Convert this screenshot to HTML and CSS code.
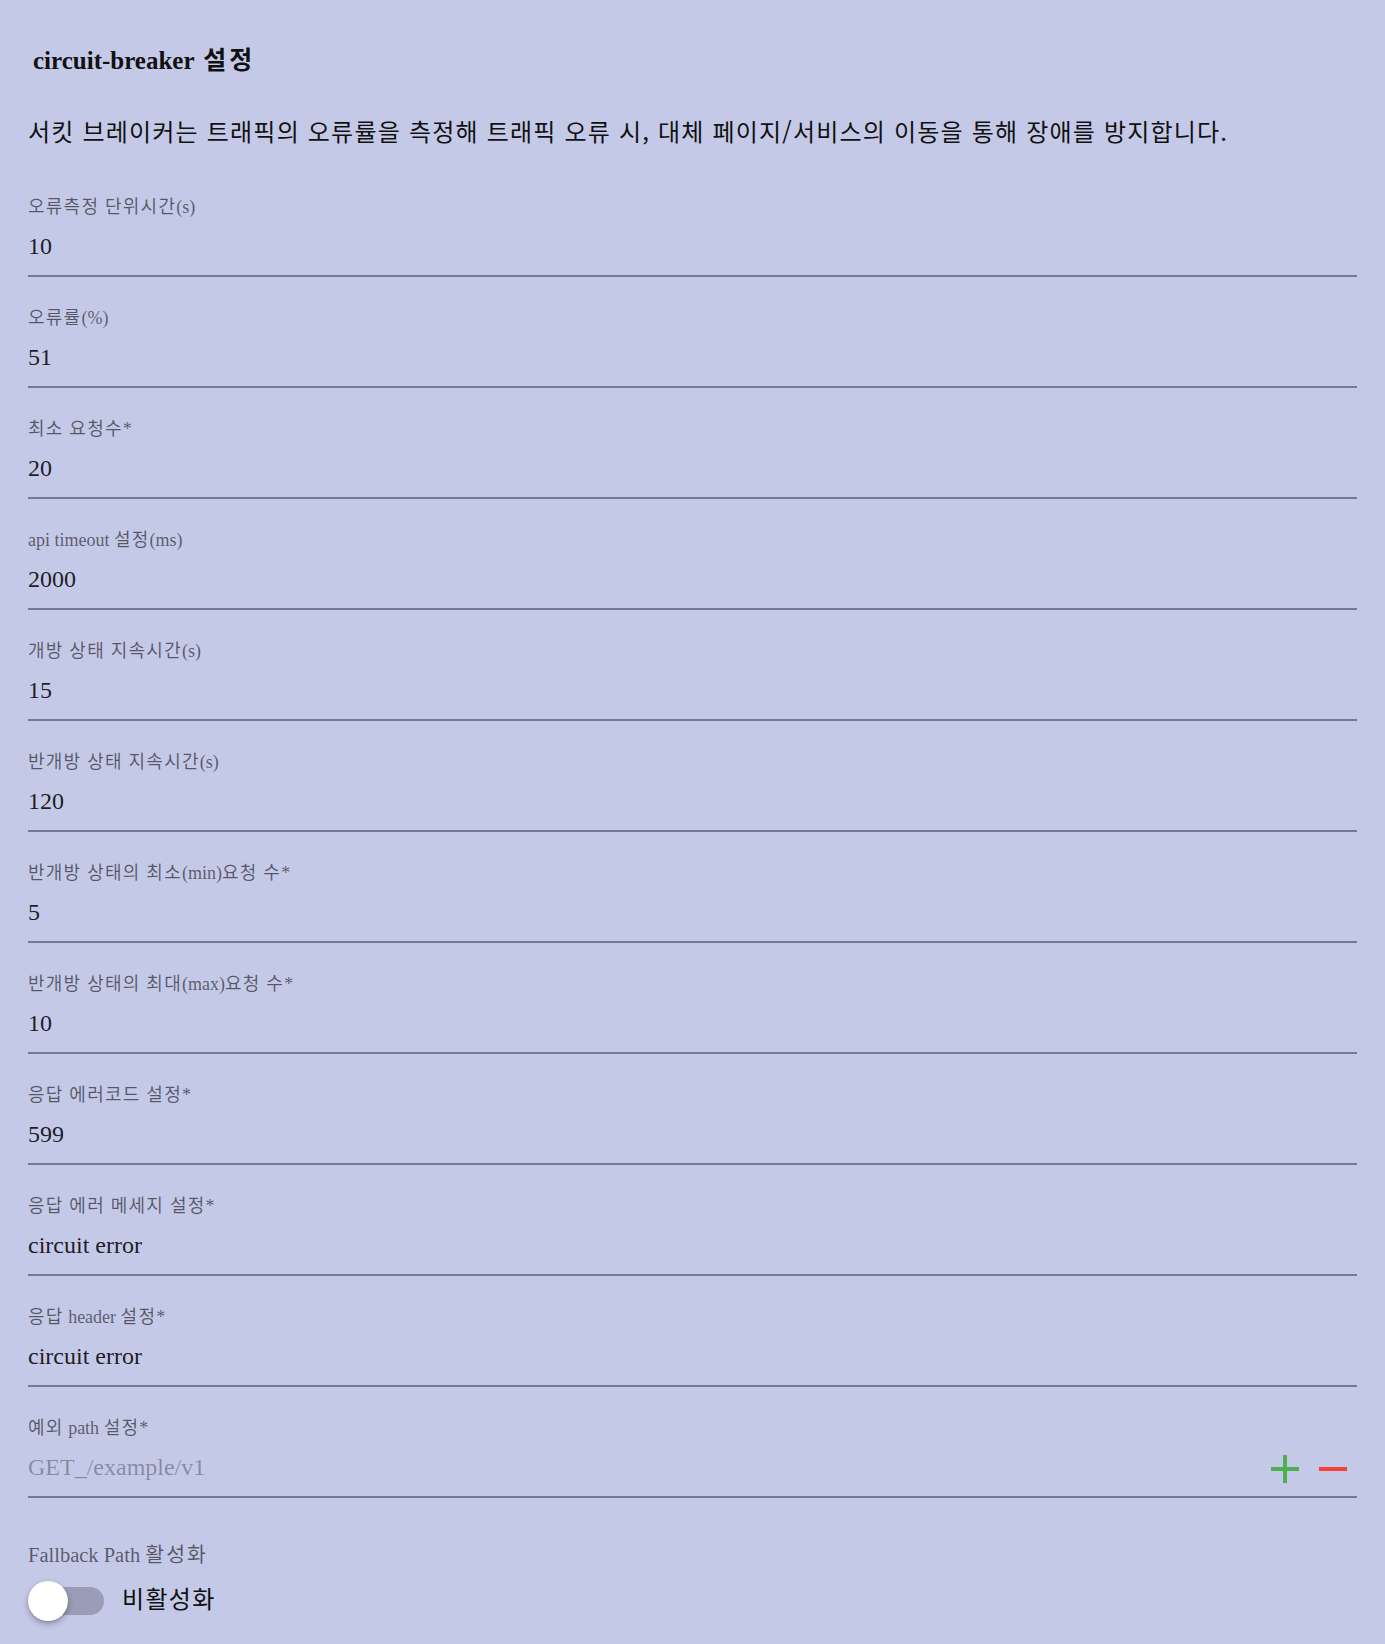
FILE: index.html
```html
<!DOCTYPE html>
<html lang="ko">
<head>
<meta charset="utf-8">
<title>circuit-breaker 설정</title>
<link rel="stylesheet" href="styles.css">
</head>
<body>
<main class="page">
  <h2 class="title">circuit-breaker <span class="ko">설정</span></h2>
  <p class="desc">서킷 브레이커는 트래픽의 오류률을 측정해 트래픽 오류 시, 대체 페이지/서비스의 이동을 통해 장애를 방지합니다.</p>

  <div class="fields">
    <label class="field"><span class="label"><span class="ko">오류측정 단위시간</span>(s)</span><input class="input" value="10"></label>
    <label class="field"><span class="label"><span class="ko">오류률</span>(%)</span><input class="input" value="51"></label>
    <label class="field"><span class="label"><span class="ko">최소 요청수</span>*</span><input class="input" value="20"></label>
    <label class="field"><span class="label">api timeout <span class="ko">설정</span>(ms)</span><input class="input" value="2000"></label>
    <label class="field"><span class="label"><span class="ko">개방 상태 지속시간</span>(s)</span><input class="input" value="15"></label>
    <label class="field"><span class="label"><span class="ko">반개방 상태 지속시간</span>(s)</span><input class="input" value="120"></label>
    <label class="field"><span class="label"><span class="ko">반개방 상태의 최소</span>(min)<span class="ko">요청 수</span>*</span><input class="input" value="5"></label>
    <label class="field"><span class="label"><span class="ko">반개방 상태의 최대</span>(max)<span class="ko">요청 수</span>*</span><input class="input" value="10"></label>
    <label class="field"><span class="label"><span class="ko">응답 에러코드 설정</span>*</span><input class="input" value="599"></label>
    <label class="field"><span class="label"><span class="ko">응답 에러 메세지 설정</span>*</span><input class="input" value="circuit error"></label>
    <label class="field"><span class="label"><span class="ko">응답</span> header <span class="ko">설정</span>*</span><input class="input" value="circuit error"></label>
    <div class="field">
      <span class="label"><span class="ko">예외</span> path <span class="ko">설정</span>*</span>
      <div class="input-row">
        <input class="input" placeholder="GET_/example/v1">
        <div class="actions">
          <button class="icon-btn" type="button" aria-label="추가">
            <svg width="28" height="28" viewBox="0 0 28 28"><path d="M14 0v28M0 14h28" stroke="#4caf50" stroke-width="4"/></svg>
          </button>
          <button class="icon-btn" type="button" aria-label="삭제">
            <svg width="28" height="28" viewBox="0 0 28 28"><path d="M0 14h28" stroke="#f44336" stroke-width="4"/></svg>
          </button>
        </div>
      </div>
    </div>
  </div>

  <section class="fallback">
    <span class="label fallback-label">Fallback Path <span class="ko">활성화</span></span>
    <div class="switch-row">
      <span class="switch">
        <span class="track"></span>
        <span class="knob"></span>
      </span>
      <span class="switch-text">비활성화</span>
    </div>
  </section>
</main>
</body>
</html>
```
FILE: styles.css
```css
html, body {
  margin: 0;
  padding: 0;
  background: #c5c9e8;
}

.page {
  padding: 46px 28px 20px;
  font-family: "Liberation Serif", "Noto Sans CJK KR", serif;
  color: rgba(0, 0, 0, 0.87);
}

.title {
  margin: 0 0 0 5px;
  font-size: 25px;
  line-height: 30px;
  font-weight: bold;
  color: #111;
  word-spacing: 3px;
}

.title .ko {
  letter-spacing: 3px;
}

.desc {
  margin: 38px 0 0;
  font-family: "Noto Sans CJK KR", sans-serif;
  font-size: 24px;
  line-height: 34px;
  letter-spacing: 1.2px;
  color: #111;
}

.fields {
  display: flex;
  flex-direction: column;
  gap: 29px;
  margin-top: 47px;
}

.field {
  display: flex;
  flex-direction: column;
  border-bottom: 2px solid #777a8f;
  padding-bottom: 13px;
}

.label {
  font-size: 18px;
  line-height: 24px;
  color: rgba(0, 0, 0, 0.56);
}

.label .ko {
  letter-spacing: 1.25px;
}

.input {
  display: block;
  width: 100%;
  box-sizing: border-box;
  margin: 11px 0 0;
  padding: 0;
  border: none;
  outline: none;
  background: transparent;
  font-family: "Liberation Serif", "Noto Sans CJK KR", serif;
  font-size: 24px;
  line-height: 32px;
  height: 32px;
  color: rgba(0, 0, 0, 0.87);
}

.input::placeholder {
  color: rgba(0, 0, 0, 0.33);
  opacity: 1;
}

.input-row {
  display: flex;
  align-items: center;
}

.input-row .input {
  flex: 1;
  min-width: 0;
}

.actions {
  display: flex;
  align-items: center;
  gap: 20px;
  margin: 11px 10px 0 0;
  padding-top: 4px;
}

.icon-btn {
  display: block;
  padding: 0;
  border: none;
  background: none;
  width: 28px;
  height: 28px;
}

.icon-btn svg {
  display: block;
}

.fallback {
  display: flex;
  flex-direction: column;
  margin-top: 44px;
}

.fallback-label {
  font-size: 20.5px;
  line-height: 26px;
}

.fallback-label .ko {
  letter-spacing: 2px;
}

.switch-row {
  display: flex;
  align-items: center;
  gap: 18px;
  margin-top: 13px;
}

.switch {
  position: relative;
  width: 76px;
  height: 40px;
  flex: none;
}

.track {
  position: absolute;
  left: 2px;
  right: 0;
  top: 6px;
  height: 28px;
  border-radius: 14px;
  background: #9a9db5;
}

.knob {
  position: absolute;
  left: 0;
  top: 0;
  width: 40px;
  height: 40px;
  border-radius: 50%;
  background: #fff;
  box-shadow: 0 3px 6px rgba(0, 0, 0, 0.28), 0 1px 2px rgba(0, 0, 0, 0.14);
}

.switch-text {
  font-family: "Noto Sans CJK KR", sans-serif;
  font-size: 24px;
  line-height: 34px;
  letter-spacing: 1.3px;
  color: #111;
  margin-top: -6px;
}
```
